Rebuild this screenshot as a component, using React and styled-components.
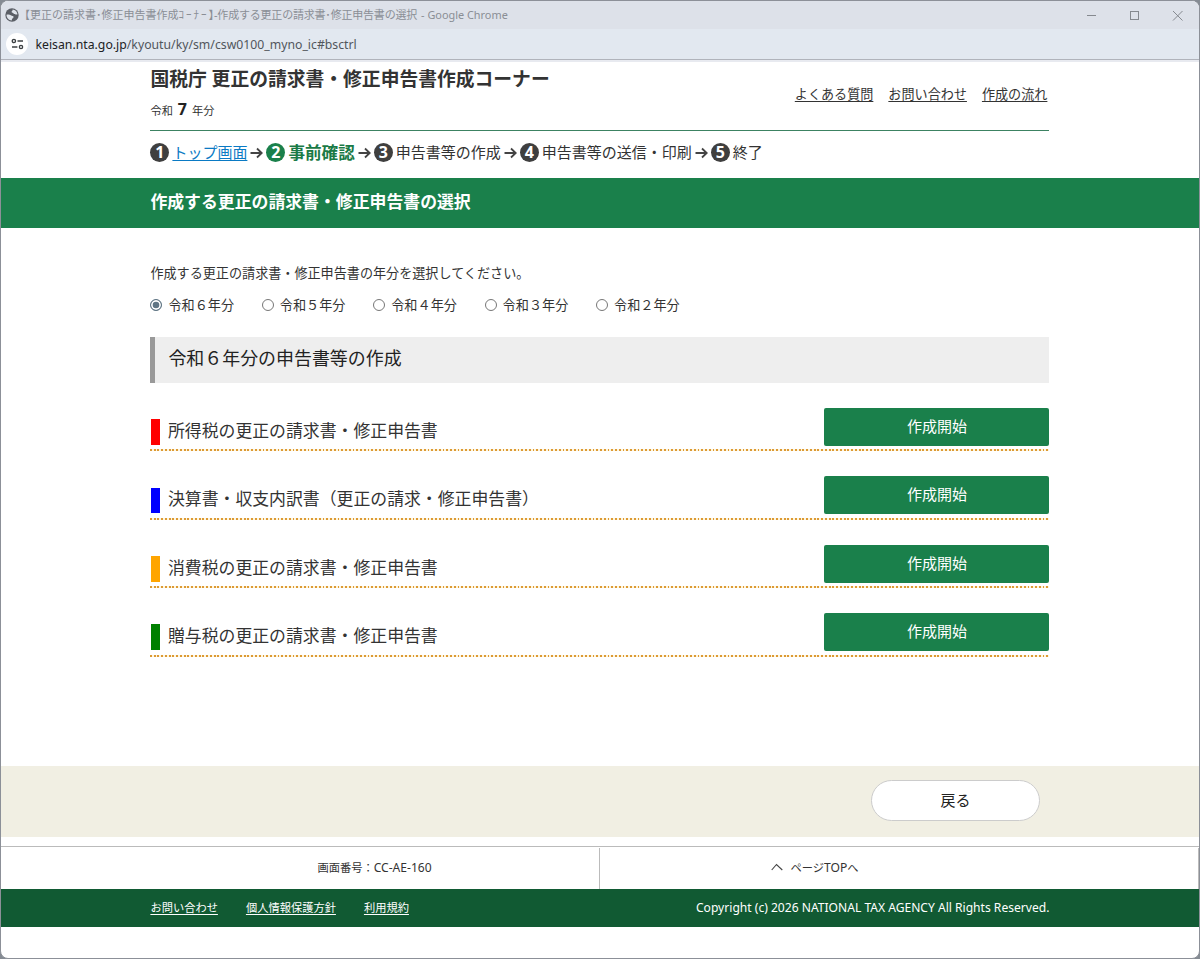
import { Fragment, useState } from "react";
import styled, { createGlobalStyle } from "styled-components";

const YEARS = ["令和６年分", "令和５年分", "令和４年分", "令和３年分", "令和２年分"];

const STEPS = [
  { label: "トップ画面", link: true },
  { label: "事前確認", current: true },
  { label: "申告書等の作成" },
  { label: "申告書等の送信・印刷" },
  { label: "終了" },
];

const FORMS = [
  { label: "所得税の更正の請求書・修正申告書", color: "#ff0000" },
  { label: "決算書・収支内訳書（更正の請求・修正申告書）", color: "#0000ff" },
  { label: "消費税の更正の請求書・修正申告書", color: "#ffa500" },
  { label: "贈与税の更正の請求書・修正申告書", color: "#008000" },
];

const Arrow = () => (
  <ArrowSvg viewBox="0 0 13 12">
    <path d="M0.5 6H11.5M7 1.5L11.7 6L7 10.5" />
  </ArrowSvg>
);

const TitleBar = () => (
  <TitleBlock>
    <svg width="14" height="14" viewBox="0 0 14 14">
      <circle cx="7" cy="7" r="6.7" fill="#5b5f66" />
      <path
        d="M7.6 1.4C8.2 2.6 6.4 2.8 6.6 4C6.8 5 8.2 4.6 8.6 5.6C9 6.6 10.6 6.6 12.4 6.4C12.4 3.8 10.2 1.6 7.6 1.4Z"
        fill="#dfe3ea"
      />
      <path
        d="M1.5 6.8C3 6.4 4.6 6.4 5.8 7.2C7 8 8.6 7.6 8.6 9C8.4 10.4 7 10 6.8 12.5C3.8 12.4 1.6 10 1.5 6.8Z"
        fill="#dfe3ea"
      />
    </svg>
    <TitleText>
      【更正の請求書･修正申告書作成
      <Kana>ｺｰﾅｰ</Kana>
      <Bracket>】</Bracket>
      <Tight>-作成する更正の請求書･修正申告書の選択</Tight>
      <Browser>- Google Chrome</Browser>
    </TitleText>
    <WindowButtons viewBox="0 0 98 12">
      <path d="M1 6.5H10" />
      <rect x="44.5" y="2.5" width="8" height="8" />
      <path d="M87 2L96.5 11.5M96.5 2L87 11.5" />
    </WindowButtons>
  </TitleBlock>
);

const App = () => {
  const [year, setYear] = useState(YEARS[0]);

  return (
    <>
      <GlobalStyle />
      <Window>
        <TitleBar />
        <AddressBar>
          <SiteInfo>
            <svg width="13" height="12" viewBox="0 0 13 12">
              <g fill="none" stroke="#3c4043" strokeWidth="1.4">
                <circle cx="2.9" cy="3" r="1.6" />
                <path d="M6.5 3H12M1 9H6.4" />
                <circle cx="10" cy="9" r="1.6" />
              </g>
            </svg>
          </SiteInfo>
          <Url>
            <b>keisan.nta.go.jp</b>/kyoutu/ky/sm/csw0100_myno_ic#bsctrl
          </Url>
        </AddressBar>

        <Header>
          <div>
            <SiteTitle>国税庁 更正の請求書・修正申告書作成コーナー</SiteTitle>
            <SiteYear>
              令和 <b>7</b> 年分
            </SiteYear>
          </div>
          <HeaderLinks>
            <a href="#faq">よくある質問</a>
            <a href="#contact">お問い合わせ</a>
            <a href="#flow">作成の流れ</a>
          </HeaderLinks>
        </Header>

        <Steps>
          {STEPS.map((step, i) => (
            <Fragment key={step.label}>
              {i > 0 && <Arrow />}
              <StepNumber $current={step.current}>{i + 1}</StepNumber>
              {step.link ? (
                <StepLink href="#top">{step.label}</StepLink>
              ) : (
                <StepLabel $current={step.current}>{step.label}</StepLabel>
              )}
            </Fragment>
          ))}
        </Steps>

        <Banner>
          <BannerTitle>作成する更正の請求書・修正申告書の選択</BannerTitle>
        </Banner>

        <Main>
          <Lead>作成する更正の請求書・修正申告書の年分を選択してください。</Lead>
          <Years>
            {YEARS.map((y) => (
              <YearLabel key={y}>
                <Radio
                  type="radio"
                  name="year"
                  checked={year === y}
                  onChange={() => setYear(y)}
                />
                {y}
              </YearLabel>
            ))}
          </Years>
          <SectionTitle>{year}の申告書等の作成</SectionTitle>
          {FORMS.map((form) => (
            <FormRow key={form.label}>
              <FormName>
                <ColorBar $color={form.color} />
                {form.label}
              </FormName>
              <StartBtn>作成開始</StartBtn>
            </FormRow>
          ))}
        </Main>

        <BackArea>
          <BackBtn>戻る</BackBtn>
        </BackArea>

        <PageInfo>
          <PageCell>
            <span>
              画面番号：<Latin>CC-AE-160</Latin>
            </span>
          </PageCell>
          <PageCell $right>
            <svg width="12" height="8" viewBox="0 0 12 8">
              <path d="M0.7 7L5.5 1.5L11.3 7" fill="none" stroke="#444" strokeWidth="1.1" />
            </svg>
            <span>
              ページ<Latin>TOP</Latin>へ
            </span>
          </PageCell>
        </PageInfo>

        <Footer>
          <FooterInner>
            <FooterLinks>
              <a href="#contact">お問い合わせ</a>
              <a href="#privacy">個人情報保護方針</a>
              <a href="#terms">利用規約</a>
            </FooterLinks>
            <Latin>
              Copyright (c) 2026 NATIONAL TAX AGENCY All Rights Reserved.
            </Latin>
          </FooterInner>
        </Footer>
      </Window>
    </>
  );
};

const GlobalStyle = createGlobalStyle`
  * {
    box-sizing: border-box;
  }

  body {
    margin: 0;
    overflow: hidden;
    background-color: #858b93;
    color: #333;
    font-family: "Noto Sans", "Noto Sans CJK JP", sans-serif;
  }

  a {
    color: inherit;
    text-underline-offset: 2px;
  }

  button {
    font-family: inherit;
  }
`;

const Window = styled.div`
  display: flex;
  flex-direction: column;
  width: 1200px;
  height: 959px;
  border: 1px solid #8c9098;
  border-radius: 8px;
  background-color: white;
  overflow: hidden;
`;

const TitleBlock = styled.div`
  display: flex;
  align-items: center;
  flex: none;
  height: 28px;
  padding: 0 15px 1px 4px;
  background-color: #dde1e9;
`;

const TitleText = styled.div`
  display: flex;
  margin: 0 auto 0 0;
  color: #8a8e95;
  font-size: 11px;
  line-height: 16px;
  white-space: nowrap;
`;

const Kana = styled.span`
  letter-spacing: 2px;
`;

const Bracket = styled.span`
  font-feature-settings: "halt";
`;

const Tight = styled.span`
  letter-spacing: -0.2px;
`;

const Browser = styled.span`
  margin-left: 4px;
  font-size: 10.9px;
`;

const WindowButtons = styled.svg`
  width: 98px;
  height: 12px;
  fill: none;
  stroke: #85898f;
`;

const AddressBar = styled.div`
  display: flex;
  align-items: center;
  flex: none;
  height: 33px;
  padding: 0 5px 1px;
  background-color: #e2e8f0;
  border-bottom: 2px solid #e8eaf0;
  box-shadow: inset 0 -1px 0 #b0b3bb;
`;

const SiteInfo = styled.div`
  display: flex;
  align-items: center;
  justify-content: center;
  width: 22px;
  height: 22px;
  border-radius: 50%;
  background-color: white;
`;

const Url = styled.div`
  margin-left: 7.5px;
  padding-top: 1px;
  color: #51565c;
  font-size: 12.25px;

  b {
    color: #202124;
    font-weight: 400;
  }
`;

const Header = styled.header`
  display: flex;
  justify-content: space-between;
  flex: none;
  width: 899px;
  height: 69px;
  margin: 0 149.4px;
  border-bottom: 1px solid #3c8262;
`;

const SiteTitle = styled.h1`
  margin: 0;
  font-size: 18.8px;
  line-height: 35px;
`;

const SiteYear = styled.div`
  font-size: 11.25px;
  line-height: 25px;

  b {
    margin: 0 2px;
    color: #222;
    font-size: 16px;
  }
`;

const HeaderLinks = styled.nav`
  display: flex;
  gap: 15px;
  padding: 22px 2px 0 0;
  font-size: 13.1px;
  line-height: 20px;
`;

const Steps = styled.div`
  display: flex;
  align-items: center;
  flex: none;
  gap: 3px;
  width: 899px;
  height: 47px;
  margin: 0 149.4px;
  padding-bottom: 4px;
  font-size: 15px;
`;

const ArrowSvg = styled.svg`
  width: 13px;
  height: 12px;
  fill: none;
  stroke: #444;
  stroke-width: 1.8;
`;

const StepNumber = styled.span`
  width: 19px;
  height: 19px;
  border-radius: 50%;
  background-color: ${(props) => (props.$current ? "#1a804b" : "#3f3f3f")};
  color: white;
  font-size: 16px;
  font-weight: 700;
  line-height: 19px;
  text-align: center;
`;

const StepLink = styled.a`
  padding-bottom: 2px;
  color: #0a7ac4;
`;

const StepLabel = styled.span`
  padding-bottom: 2px;
  color: ${(props) => (props.$current ? "#1a7a46" : "#333")};
  font-size: ${(props) => (props.$current ? "16.6px" : "15px")};
  font-weight: ${(props) => (props.$current ? 700 : 400)};
`;

const Banner = styled.div`
  flex: none;
  height: 50px;
  background-color: #1a804b;
`;

const BannerTitle = styled.h2`
  width: 899px;
  margin: 0 149.4px;
  color: white;
  font-size: 16.87px;
  line-height: 47px;
`;

const Main = styled.main`
  flex: none;
  width: 899px;
  height: 538px;
  margin: 0 149.4px;
`;

const Lead = styled.p`
  margin: 0;
  padding-top: 35px;
  font-size: 13.1px;
  line-height: 20px;
`;

const Years = styled.div`
  display: flex;
  gap: 27.7px;
  margin-top: 12px;
`;

const YearLabel = styled.label`
  display: flex;
  align-items: center;
  font-size: 13.15px;
  line-height: 20px;
`;

const Radio = styled.input`
  appearance: none;
  width: 12px;
  height: 12px;
  margin: 0 6px 0 0;
  border: 1px solid #777;
  border-radius: 50%;
  background-color: white;

  &:checked {
    border-color: #5f7584;
    background-color: #5f7584;
    box-shadow: inset 0 0 0 1.7px white;
  }
`;

const SectionTitle = styled.h3`
  height: 46px;
  margin: 22px 0 0;
  padding-left: 13px;
  border-left: 5px solid #999;
  background-color: #eee;
  color: #222;
  font-size: 17.95px;
  font-weight: 400;
  line-height: 42px;
`;

const FormRow = styled.div`
  display: flex;
  justify-content: space-between;
  height: 68.4px;
  padding-top: 25px;
  background: repeating-linear-gradient(
      90deg,
      #dc9a35 0 1.9px,
      #fff6df 1.9px 3.75px
    )
    left bottom / 100% 2px no-repeat;
`;

const FormName = styled.div`
  display: flex;
  align-items: center;
  height: 43px;
  font-size: 16.87px;
`;

const ColorBar = styled.span`
  width: 9.2px;
  height: 25.5px;
  margin: 5px 8px 0 0.4px;
  background-color: ${(props) => props.$color};
`;

const StartBtn = styled.button`
  width: 225px;
  height: 38px;
  padding: 0 0 3px;
  border: 0;
  border-radius: 2px;
  background-color: #1a804b;
  color: white;
  font-size: 15px;
`;

const BackArea = styled.div`
  display: flex;
  justify-content: flex-end;
  flex: none;
  height: 71px;
  padding: 14px 159px 0 0;
  background-color: #f1efe3;
`;

const BackBtn = styled.button`
  width: 169px;
  height: 41px;
  padding: 0 0 3px;
  border: 1px solid #ccc;
  border-radius: 21px;
  background-color: white;
  color: #222;
  font-size: 15px;
`;

const PageInfo = styled.div`
  display: flex;
  flex: none;
  height: 43px;
  margin-top: 9px;
  border-top: 1px solid #bbb;
`;

const PageCell = styled.div`
  display: flex;
  align-items: center;
  justify-content: center;
  width: 599px;
  gap: 7px;
  height: 41px;
  margin-top: 1px;
  padding: ${(props) => (props.$right ? "0 168px 3px 0" : "0 0 3px 149px")};
  border-right: 1px solid #bbb;
  font-size: 11.25px;
  white-space: nowrap;
`;

const Latin = styled.span`
  font-size: 12.08px;
`;

const Footer = styled.footer`
  flex: none;
  height: 38px;
  background-color: #115a33;
  color: white;
  font-size: 11.25px;
  line-height: 37px;
`;

const FooterInner = styled.div`
  display: flex;
  justify-content: space-between;
  width: 899px;
  margin: 0 149.4px;
`;

const FooterLinks = styled.div`
  display: flex;
  gap: 28px;
`;

export default App;
